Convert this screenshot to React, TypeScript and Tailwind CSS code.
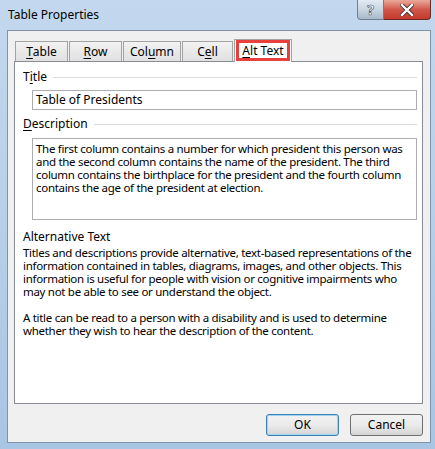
import React from "react";

const font = { fontFamily: '"Noto Sans", "Segoe UI", sans-serif' };

const Key = ({ children }: { children: React.ReactNode }) => (
  <span className="underline decoration-1 underline-offset-[2px]">{children}</span>
);

const Tab = ({ label, width }: { label: React.ReactNode; width: string }) => (
  <div
    className={`${width} h-[20px] mt-[1px] border border-b-0 border-[#a3a3a3] bg-gradient-to-b from-[#f2f2f2] to-[#e0e0e0] flex items-center justify-center text-[12px] text-black`}
  >
    {label}
  </div>
);

const Section = ({ label }: { label: React.ReactNode }) => (
  <div className="flex items-center gap-[6px] h-[14px]">
    <span className="text-[12px] leading-[14px] text-black">{label}</span>
    <div className="flex-1 h-px bg-[#dcdcdc]" />
  </div>
);

const Lines = ({ lines }: { lines: string[] }) => (
  <>
    {lines.map((l, i) => (
      <div key={i} className="whitespace-nowrap h-[13px]">
        {l}
      </div>
    ))}
  </>
);

const desc = [
  "The first column contains a number for which president this person was",
  "and the second column contains the name of the president. The third",
  "column contains the birthplace for the president and the fourth column",
  "contains the age of the president at election.",
];

const alt1 = [
  "Titles and descriptions provide alternative, text-based representations of the",
  "information contained in tables, diagrams, images, and other objects. This",
  "information is useful for people with vision or cognitive impairments who",
  "may not be able to see or understand the object.",
];

const alt2 = [
  "A title can be read to a person with a disability and is used to determine",
  "whether they wish to hear the description of the content.",
];

export default function App() {
  return (
    <div
      className="w-[435px] h-[449px] overflow-hidden bg-gradient-to-b from-[#c3d8ee] via-[#b7cfe8] to-[#a9c5e4] flex flex-col"
      style={font}
    >
      {/* title bar */}
      <div className="h-[30px] flex items-start">
        <div className="pl-[8px] pt-[7px] text-[12px] leading-[16px] text-black">Table Properties</div>
        <div className="ml-auto mr-[4px] flex">
          <div className="w-[27px] h-[20px] rounded-bl-[4px] border border-t-0 border-[#6d7e92] bg-gradient-to-b from-[#e3eaf2] via-[#c9d5e2] to-[#a8b9cc] flex items-center justify-center">
            <span
              className="text-[14px] font-bold text-white leading-none"
              style={{ WebkitTextStroke: "0.6px #3b4a5c" }}
            >
              ?
            </span>
          </div>
          <div className="w-[47px] h-[20px] rounded-br-[4px] border border-l-0 border-t-0 border-[#6b2a25] bg-gradient-to-b from-[#e9a99b] via-[#d0574a] to-[#c3392c] flex items-center justify-center">
            <svg width="14" height="12" viewBox="0 0 14 12">
              <path
                d="M2 1 L12 11 M12 1 L2 11"
                stroke="#3a2a2a"
                strokeWidth="4"
                strokeLinecap="square"
              />
              <path
                d="M2 1 L12 11 M12 1 L2 11"
                stroke="#ffffff"
                strokeWidth="2.4"
                strokeLinecap="square"
              />
            </svg>
          </div>
        </div>
      </div>

      {/* client area */}
      <div className="ml-[7px] mr-[4px] mb-[6px] flex-1 bg-[#f0f0f0] border border-[#7f93ab] pl-[6px] pr-[7px] pt-[7px] flex flex-col">
        {/* tabs */}
        <div className="flex items-end h-[23px] pl-[1px] gap-[1px] relative z-10">
          <Tab width="w-[53px]" label={<><Key>T</Key>able</>} />
          <Tab width="w-[53px]" label={<><Key>R</Key>ow</>} />
          <Tab width="w-[58px]" label={<>Col<Key>u</Key>mn</>} />
          <Tab width="w-[51px]" label={<>C<Key>e</Key>ll</>} />
          <div className="w-[58px] h-[23px] -mb-px border border-b-0 border-[#a3a3a3] bg-white flex items-end justify-center pb-[1px] relative">
            <div className="w-[54px] h-[21px] border-[3px] border-[#e8413c] flex items-center justify-center text-[12px] text-black">
              <span>
                <Key>A</Key>lt Text
              </span>
            </div>
          </div>
        </div>

        {/* panel */}
        <div className="h-[343px] bg-white border border-[#898c95] pl-[8px] pr-[5px] pt-[8px] flex flex-col">
          <Section label={<>T<Key>i</Key>tle</>} />
          <div className="ml-[9px] mt-[6px] h-[20px] border border-[#abadb3] pl-[3px] flex items-center text-[12px] text-black">
            Table of Presidents
          </div>
          <div className="mt-[7px]">
            <Section label={<><Key>D</Key>escription</>} />
          </div>
          <div className="ml-[9px] mt-[7px] h-[82px] border border-[#abadb3] pl-[3px] pt-[3px] text-[11.5px] tracking-[-0.3px] leading-[13px] text-black">
            <Lines lines={desc} />
          </div>
          <div className="mt-[10px] text-[12px] leading-[13px] text-black">Alternative Text</div>
          <div className="mt-[3px] text-[11.5px] tracking-[-0.3px] leading-[13px] text-black">
            <Lines lines={alt1} />
            <div className="h-[13px]" />
            <Lines lines={alt2} />
          </div>
        </div>

        {/* buttons */}
        <div className="flex justify-end gap-[11px] mt-[10px]">
          <button className="w-[73px] h-[22px] rounded-[3px] border border-[#3c7fb1] bg-gradient-to-b from-[#f2f2f2] via-[#ebebeb] to-[#d5d5d5] shadow-[inset_0_0_0_1px_#9fd5f3] text-[12px] text-black">
            OK
          </button>
          <button className="w-[73px] h-[22px] rounded-[3px] border border-[#707070] bg-gradient-to-b from-[#f2f2f2] via-[#ebebeb] to-[#d5d5d5] text-[12px] text-black">
            Cancel
          </button>
        </div>
      </div>
    </div>
  );
}
